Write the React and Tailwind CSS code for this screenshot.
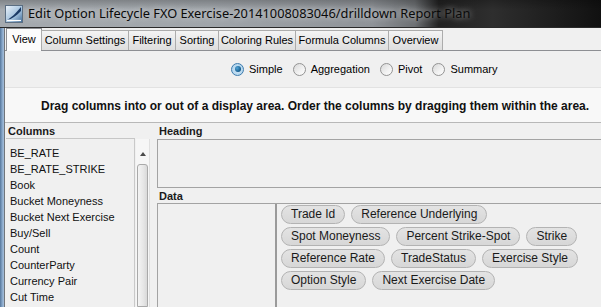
import React from "react";

const TABS = [
  { label: "View", w: "w-[36px]", active: true },
  { label: "Column Settings", w: "w-[88px]" },
  { label: "Filtering", w: "w-[48px]" },
  { label: "Sorting", w: "w-[44px]" },
  { label: "Coloring Rules", w: "w-[78px]" },
  { label: "Formula Columns", w: "w-[94px]" },
  { label: "Overview", w: "w-[55px]" },
];

const MODES = [
  { label: "Simple", checked: true },
  { label: "Aggregation" },
  { label: "Pivot" },
  { label: "Summary" },
];

const COLUMNS = [
  "BE_RATE",
  "BE_RATE_STRIKE",
  "Book",
  "Bucket Moneyness",
  "Bucket Next Exercise",
  "Buy/Sell",
  "Count",
  "CounterParty",
  "Currency Pair",
  "Cut Time",
];

const CHIP_ROWS = [
  ["Trade Id", "Reference Underlying"],
  ["Spot Moneyness", "Percent Strike-Spot", "Strike"],
  ["Reference Rate", "TradeStatus", "Exercise Style"],
  ["Option Style", "Next Exercise Date"],
];

function AppIcon() {
  return (
    <svg width="18" height="18" viewBox="0 0 18 18">
      <defs>
        <linearGradient id="ig" x1="0" y1="0" x2="1" y2="1">
          <stop offset="0" stopColor="#eef4fa" />
          <stop offset="0.6" stopColor="#9fbfdc" />
          <stop offset="1" stopColor="#3d6794" />
        </linearGradient>
      </defs>
      <rect x="0.5" y="0.5" width="17" height="17" fill="url(#ig)" stroke="#5b6e82" />
      <path d="M2 15 C6 13 10 9 16 2 L16 6 C11 11 7 14 2 15 Z" fill="#1c3b66" />
      <path d="M2 15.5 L16 15.5" stroke="#ffffff" strokeWidth="1.2" />
    </svg>
  );
}

function Radio({ checked }) {
  return checked ? (
    <span className="w-[13px] h-[13px] rounded-full border border-[#3d7bad] bg-[radial-gradient(circle,#cfe6f7_0%,#a9cfe9_100%)] flex items-center justify-center">
      <span className="w-[6px] h-[6px] rounded-full bg-[radial-gradient(circle_at_35%_35%,#4fa3d6_0%,#155b8c_70%,#0d3f66_100%)]" />
    </span>
  ) : (
    <span className="w-[13px] h-[13px] rounded-full border border-[#939393] bg-[linear-gradient(135deg,#d8d8d8_0%,#f2f2f2_60%,#fdfdfd_100%)]" />
  );
}

function Chip({ label }) {
  return (
    <span className="h-[19px] px-[9px] rounded-full border border-[#b3b3b3] bg-[linear-gradient(180deg,#e3e3e3_0%,#d7d7d7_100%)] text-[12px] leading-[17px] text-[#1a1a1a] whitespace-nowrap">
      {label}
    </span>
  );
}

export default function App() {
  return (
    <div className="w-[601px] h-[307px] overflow-hidden flex flex-col bg-[#f0f0f0] font-['Liberation_Sans',Arial,sans-serif] text-[11px] text-black">
      {/* title bar */}
      <div className="h-[28px] shrink-0 flex items-center pl-[5px] gap-[5px] border-b border-[#2a2a2a] bg-[linear-gradient(180deg,rgba(0,0,0,0.22)_0%,rgba(0,0,0,0)_35%),linear-gradient(90deg,#a5aaaf_0%,#a0a5aa_35%,#8f9398_62%,#6d7073_69%,#222_73%,#2e2e2e_82%,#111_100%)]">
        <AppIcon />
        <span className="text-[12.8px] text-[#0a0a0a] whitespace-nowrap [text-shadow:0_0_6px_rgba(255,255,255,0.7)] font-['Noto_Sans',sans-serif]">
          Edit Option Lifecycle FXO Exercise-20141008083046/drilldown Report Plan
        </span>
      </div>

      <div className="flex-1 flex min-h-0">
        {/* window frame */}
        <div className="w-[5px] shrink-0 bg-[linear-gradient(90deg,#56779c_0%,#8aa9cb_60%,#a7bfd9_100%)] border-r border-[#70757b]" />

        <div className="flex-1 flex flex-col min-w-0">
          {/* tabs */}
          <div className="h-[23px] shrink-0 flex items-end pl-[1px] border-b border-[#8d8f93]">
            {TABS.map((t) =>
              t.active ? (
                <div
                  key={t.label}
                  className={`${t.w} h-[23px] -mb-px bg-[#fcfcfc] border border-b-0 border-[#8d8f93] flex items-center justify-center pb-[1px]`}
                >
                  {t.label}
                </div>
              ) : (
                <div
                  key={t.label}
                  className={`${t.w} h-[20px] -ml-px bg-[linear-gradient(180deg,#f4f4f4_0%,#e8e8e8_50%,#dedede_100%)] border border-b-0 border-[#acacac] flex items-center justify-center whitespace-nowrap`}
                >
                  {t.label}
                </div>
              )
            )}
          </div>

          {/* view modes */}
          <div className="h-[36px] shrink-0 flex items-center pl-[226px] gap-[10px]">
            {MODES.map((m) => (
              <label key={m.label} className="flex items-center gap-[5px]">
                <Radio checked={m.checked} />
                <span>{m.label}</span>
              </label>
            ))}
          </div>

          {/* instruction */}
          <div className="h-[36px] shrink-0 flex items-center pl-[36px] pt-[1px] bg-[#f8f8f8] border-t border-[#e2e2e2] border-b border-b-[#b8b8b8] font-bold text-[12px] text-[#111] whitespace-nowrap">
            Drag columns into or out of a display area. Order the columns by dragging them within the area.
          </div>

          {/* panels */}
          <div className="flex-1 flex min-h-0 pt-[1px]">
            <div className="w-[145px] shrink-0 flex flex-col pl-[1px]">
              <div className="h-[15px] w-[129px] shrink-0 pl-[2px] leading-[15px] font-bold text-[#1a1a1a] border-b border-[#c6c6c6]">
                Columns
              </div>
              <div className="flex-1 flex min-h-0">
                <div className="w-[129px] border-r border-[#c9c9c9] pt-[6px]">
                  {COLUMNS.map((c) => (
                    <div key={c} className="h-[16px] leading-[16px] pl-[4px] whitespace-nowrap text-[#111]">
                      {c}
                    </div>
                  ))}
                </div>
                <div className="w-[14px] ml-[1px] flex flex-col items-center bg-[#f6f6f6] border-r border-[#e0e0e0]">
                  <div className="mt-[13px] w-0 h-0 border-l-[3px] border-r-[3px] border-b-[4px] border-l-transparent border-r-transparent border-b-[#4a4a4a]" />
                  <div className="mt-[8px] w-[11px] flex-1 rounded-t-[3px] border border-[#a9a9a9] bg-[linear-gradient(90deg,#f4f4f4_0%,#e6e6e6_60%,#d9d9d9_100%)]" />
                </div>
              </div>
            </div>

            <div className="flex-1 flex flex-col ml-[7px] min-w-0">
              <div className="h-[15px] shrink-0 pl-[2px] leading-[15px] font-bold text-[#1a1a1a]">Heading</div>
              <div className="h-[49px] shrink-0 border border-r-0 border-[#a3a3a3]" />
              <div className="h-[15px] shrink-0 pl-[2px] leading-[17px] font-bold text-[#1a1a1a]">Data</div>
              <div className="flex-1 flex border border-r-0 border-b-0 border-[#a3a3a3] min-h-0">
                <div className="w-[119px] shrink-0 border-r-2 border-[#9a9a9a]" />
                <div className="flex-1 flex flex-col gap-[3px] pl-[4px] pt-[1px]">
                  {CHIP_ROWS.map((row, i) => (
                    <div key={i} className="flex gap-[6px]">
                      {row.map((c) => (
                        <Chip key={c} label={c} />
                      ))}
                    </div>
                  ))}
                </div>
              </div>
            </div>
          </div>
        </div>
      </div>
    </div>
  );
}
